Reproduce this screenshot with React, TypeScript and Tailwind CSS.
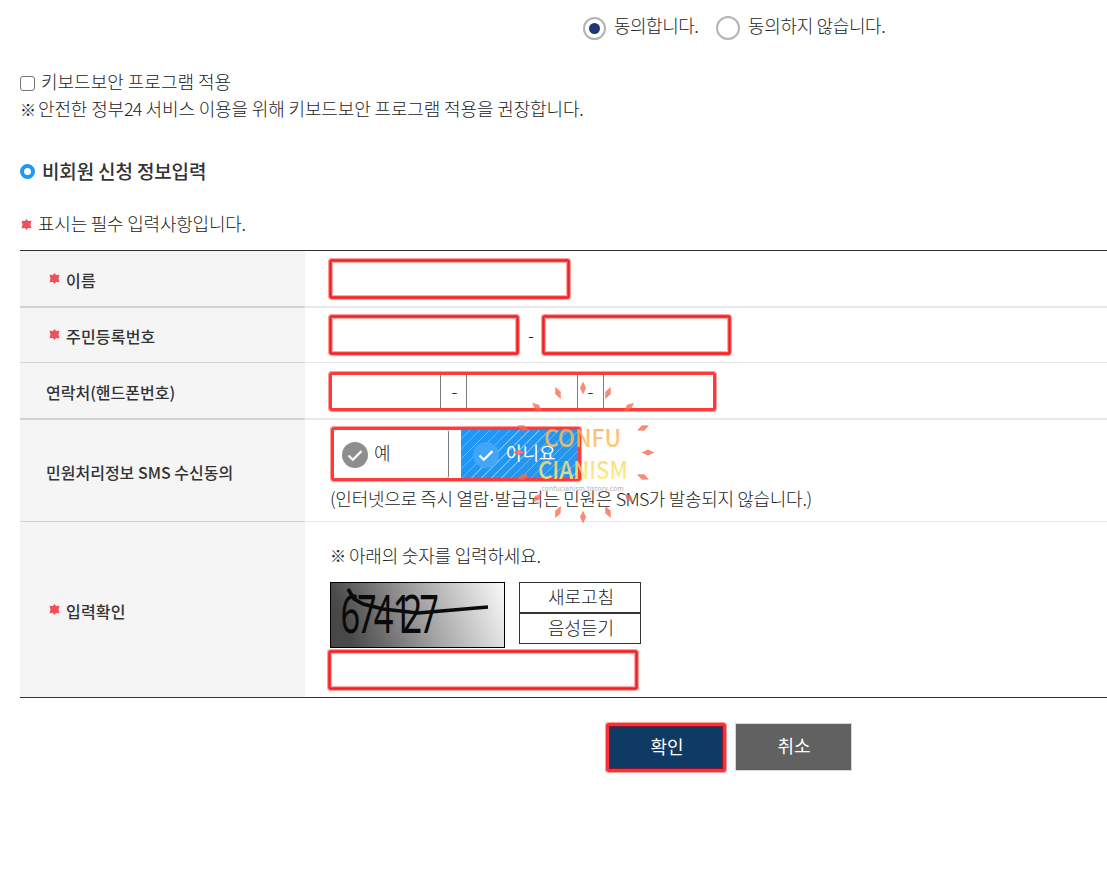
import type { ReactNode } from "react";
import clsx from "clsx";

// direction of each ray in the stamp, with its centre
const RAYS = [
  { x: 583, y: 388, r: 0 },
  { x: 608, y: 393, r: 25 },
  { x: 629, y: 407, r: 50 },
  { x: 643, y: 428, r: 68 },
  { x: 648, y: 452.5, r: 90 },
  { x: 643, y: 477, r: 112 },
  { x: 629, y: 498, r: 135 },
  { x: 608, y: 512, r: 155 },
  { x: 583, y: 517, r: 0 },
  { x: 558, y: 512, r: 25 },
  { x: 537, y: 498, r: 45 },
  { x: 523, y: 477, r: 68 },
  { x: 519, y: 452.5, r: 90 },
  { x: 523, y: 428, r: 112 },
  { x: 537, y: 407, r: 130 },
  { x: 558, y: 393, r: 155 },
];

const MARK =
  "rounded-[2px] border-[3px] border-[#ff3a3a] outline outline-1 outline-[#ff9c9c] bg-white";

function Star({ className }: { className?: string }) {
  return (
    <svg viewBox="0 0 11 11" className={clsx("size-[11px] shrink-0", className)} aria-hidden="true">
      <path
        d="M5.5 0l1.6 2 3.4-.2-1 3.7 1 3.7-3.4-.2-1.6 2-1.6-2-3.4.2 1-3.7-1-3.7 3.4.2z"
        fill="#f0505a"
      />
    </svg>
  );
}

function MarkedInput({ label, className }: { label: string; className: string }) {
  return (
    <div className={clsx(MARK, "relative h-10", className)}>
      <input
        aria-label={label}
        className="absolute -inset-[2px] border border-[#e82222] bg-transparent px-2 shadow-[inset_0_0_0_1px_#ff4040,inset_0_0_0_2px_#ffa8a8] outline-none"
      />
    </div>
  );
}

function Row({
  label,
  required,
  className,
  children,
}: {
  label: string;
  required?: boolean;
  className: string;
  children: ReactNode;
}) {
  return (
    <div className={clsx("flex", className)}>
      <div
        className={clsx(
          "flex w-[285px] shrink-0 items-center bg-[#f5f5f5] pt-[2px] text-[16px] font-medium text-[#333]",
          required ? "pl-[29px] tracking-[0.2px]" : "pl-[26px]",
        )}
      >
        {required && <Star className="mr-[6px] -mt-[3px]" />}
        {label}
      </div>
      <div className="flex-1">{children}</div>
    </div>
  );
}

function Rule({ thick, dark }: { thick?: boolean; dark?: boolean }) {
  if (dark) return <div className="h-px bg-[#333]" />;
  return (
    <div className={clsx("flex", thick ? "h-[2px]" : "h-px")}>
      <div className="w-[285px] bg-[#d2d2d2]" />
      <div className="flex-1 bg-[#e9e9e9]" />
    </div>
  );
}

function Check({ fill }: { fill: string }) {
  return (
    <svg viewBox="0 0 26 26" className="size-[26px] shrink-0" aria-hidden="true">
      <circle cx="13" cy="13" r="13" fill={fill} />
      <path d="M6.5 13.5l4.3 4.3 8.7-8.7" fill="none" stroke="#fff" strokeWidth="2.2" />
    </svg>
  );
}

function Captcha() {
  return (
    <svg viewBox="330 582 175 66" className="h-[66px] w-[175px] shrink-0" role="img">
      <defs>
        <linearGradient id="captcha" x1="0" y1="0.15" x2="1" y2="0">
          <stop offset="0" stopColor="#484848" />
          <stop offset="0.5" stopColor="#a6a6a6" />
          <stop offset="1" stopColor="#fafafa" />
        </linearGradient>
      </defs>
      <rect x="330.5" y="582.5" width="174" height="65" fill="url(#captcha)" stroke="#000" />
      <text
        transform="translate(340.5 632.5) scale(0.65 1)"
        x="0 25.5 51 80 95.5 121"
        fontFamily="'Noto Sans', sans-serif"
        fontSize="53"
        fontWeight="400"
        fill="#0a0a0a"
      >
        674127
      </text>
      <path
        d="M348 589l6 10 9 5 20 5 35 4 70-6"
        fill="none"
        stroke="#0a0a0a"
        strokeWidth="3.6"
      />
    </svg>
  );
}

function Stamp() {
  return (
    <svg
      viewBox="510 375 150 155"
      className="pointer-events-none absolute left-[510px] top-[375px] h-[155px] w-[150px]"
      aria-hidden="true"
    >
      <defs>
        <linearGradient id="stamp" gradientUnits="userSpaceOnUse" x1="0" y1="428" x2="0" y2="480">
          <stop offset="0" stopColor="#f9ae5a" />
          <stop offset="1" stopColor="#fbee78" />
        </linearGradient>
      </defs>
      {RAYS.map((p) => (
        <path
          key={`${p.x}-${p.y}`}
          d="M0-6.5L3 0 0 6.5-3 0z"
          fill="#f8694c"
          opacity="0.78"
          transform={`translate(${p.x} ${p.y}) rotate(${p.r})`}
        />
      ))}
      <g fill="url(#stamp)" opacity="0.85" fontFamily="'Noto Sans CJK KR', sans-serif" fontSize="23.5" fontWeight="500">
        <text x="544" y="447" textLength="77" lengthAdjust="spacingAndGlyphs">CONFU</text>
        <text x="538" y="478.5" textLength="90" lengthAdjust="spacingAndGlyphs">CIANISM</text>
      </g>
      <text
        x="541.5"
        y="490.5"
        textLength="82"
        fontFamily="'Noto Sans', sans-serif"
        fontSize="6.5"
        fontWeight="400"
        fill="#999"
        opacity="0.8"
      >
        confucianism.tistory.com
      </text>
    </svg>
  );
}

export default function App() {
  return (
    <main className="relative h-[874px] w-[1107px] overflow-hidden bg-white pl-5 font-['Noto_Sans_CJK_KR','Noto_Sans',sans-serif] text-[18px] leading-[26px] font-light text-[#222]">
      <div className="flex h-[67px] pl-[563px] pt-[12px]">
        <label className="flex">
          <span className="mt-[5px] mr-[8px] flex size-[23px] items-center justify-center rounded-full border-2 border-[#b3b3b3]">
            <span className="size-[11px] rounded-full bg-[#1f3776]" />
          </span>
          <span className="w-[102px] tracking-[-0.5px]">동의합니다.</span>
        </label>
        <label className="flex">
          <span className="mt-[4px] mr-[8px] size-[24px] rounded-full border-2 border-[#b3b3b3]" />
          <span className="tracking-[-0.35px]">동의하지 않습니다.</span>
        </label>
      </div>

      <label className="flex h-[28px] items-center">
        <span className="mt-[5px] mr-[6px] size-[15px] rounded-[3px] border border-[#767676]" />
        키보드보안 프로그램 적용
      </label>
      <p className="flex h-[27px] whitespace-nowrap">
        <span className="w-[18px] pt-px text-[16px]">※</span>
        <span className="tracking-[-0.13px]">
          안전한 정부<span className="tracking-[-0.8px]">24</span> 서비스 이용을 위해 키보드보안 프로그램 적용을 권장합니다.
        </span>
      </p>

      <h2 className="mt-[35px] flex h-[27px] items-center text-[19px] font-medium tracking-[-0.15px] text-[#333]">
        <span className="mt-[2px] mr-[7px] size-[15px] rounded-full border-[4px] border-[#2196f3]" />
        비회원 신청 정보입력
      </h2>
      <p className="mt-[25px] flex h-[27px] items-center tracking-[-0.22px]">
        <Star className="mr-[6px] mt-[4px] ml-px" />
        표시는 필수 입력사항입니다.
      </p>

      <section className="mt-[14px]">
        <Rule dark />
        <Row label="이름" required className="h-[55px]">
          <div className="pl-[24px] pt-[8px]">
            <MarkedInput label="이름" className="w-[241px]" />
          </div>
        </Row>
        <Rule thick />
        <Row label="주민등록번호" required className="h-[54px]">
          <div className="flex items-center pl-[24px] pt-[7px]">
            <MarkedInput label="주민등록번호 앞자리" className="w-[190px]" />
            <span className="-mt-[2px] w-[23px] pl-px text-center">-</span>
            <MarkedInput label="주민등록번호 뒷자리" className="w-[189px]" />
          </div>
        </Row>
        <Rule />
        <Row label="연락처(핸드폰번호)" className="h-[55px]">
          <div className="pl-[24px] pt-[9px]">
            <div className={clsx(MARK, "flex h-[39px] w-[387px] items-center")}>
              <div className="h-full w-[109px] border-r border-[#7d7d7d]" />
              <span className="-mt-[3px] w-[25px] pl-[2px] text-center">-</span>
              <div className="h-full w-[112px] border-x border-[#7d7d7d]" />
              <span className="-mt-[3px] w-[25px] text-center">-</span>
              <div className="h-full flex-1 border-l border-[#7d7d7d]" />
            </div>
          </div>
        </Row>
        <Rule thick />
        <Row label="민원처리정보 SMS 수신동의" className="h-[101px]">
          <div className="pl-[26px] pt-[7px]">
            <div className={clsx(MARK, "flex h-[54px] w-[250px]")}>
              <button type="button" className="flex w-[115px] items-center rounded-r-[2px] border-r border-[#7d7d7d] pl-[8px]">
                <span className="mt-px mr-[6px]">
                  <Check fill="#8e8e8e" />
                </span>
                <span className="-mt-[5px]">예</span>
              </button>
              <button
                type="button"
                className="ml-[12px] flex flex-1 items-center bg-[#2196f3] bg-[repeating-linear-gradient(135deg,transparent_0,transparent_6px,#6bb8f7_6px,#6bb8f7_7px)] pl-[12px] text-white"
              >
                <span className="mt-px mr-[7px]">
                  <Check fill="#42a5f5" />
                </span>
                <span className="-mt-[5px] font-normal">아니요</span>
              </button>
            </div>
            <p className="mt-[4px] -ml-px whitespace-nowrap tracking-[-0.3px]">
              (인터넷으로 즉시 열람<span className="-mx-[2px]">·</span>발급되는 민원은 <span className="tracking-[-0.7px]">SMS</span>가 발송되지 않습니다.)
            </p>
          </div>
        </Row>
        <Rule />
        <Row label="입력확인" required className="h-[175px]">
          <div className="pl-[25px] pt-[20px]">
            <p className="flex tracking-[-0.2px]">
              <span className="w-[19px] text-[16px]">※</span>
              아래의 숫자를 입력하세요.
            </p>
            <div className="mt-[14px] flex gap-[14px]">
              <Captcha />
              <div className="flex w-[122px] flex-col text-center leading-[26px]">
                <button type="button" className="h-[31px] border border-[#333] pb-[4px] pl-[2px]">새로고침</button>
                <button type="button" className="h-[31px] border border-[#333] pb-[4px] pl-[2px]">음성듣기</button>
              </div>
            </div>
            <MarkedInput label="입력확인" className="mt-[2px] -ml-[2px] w-[310px]" />
          </div>
        </Row>
        <Rule dark />
      </section>

      <div className="mt-[25px] flex pl-[586px] font-normal text-white">
        <button
          type="button"
          className="h-[49px] w-[120px] rounded-[2px] border-[3px] border-[#ff2d34] bg-[#0f3a63] pb-[4px] pl-[2px] outline outline-1 outline-[#ff9c9c] shadow-[inset_0_0_0_1px_#7f1a36]"
        >
          확인
        </button>
        <button type="button" className="ml-[9px] h-[48px] w-[117px] border border-[#d6d6d6] bg-[#616161] pb-[4px] pl-px">
          취소
        </button>
      </div>

      <Stamp />
    </main>
  );
}
